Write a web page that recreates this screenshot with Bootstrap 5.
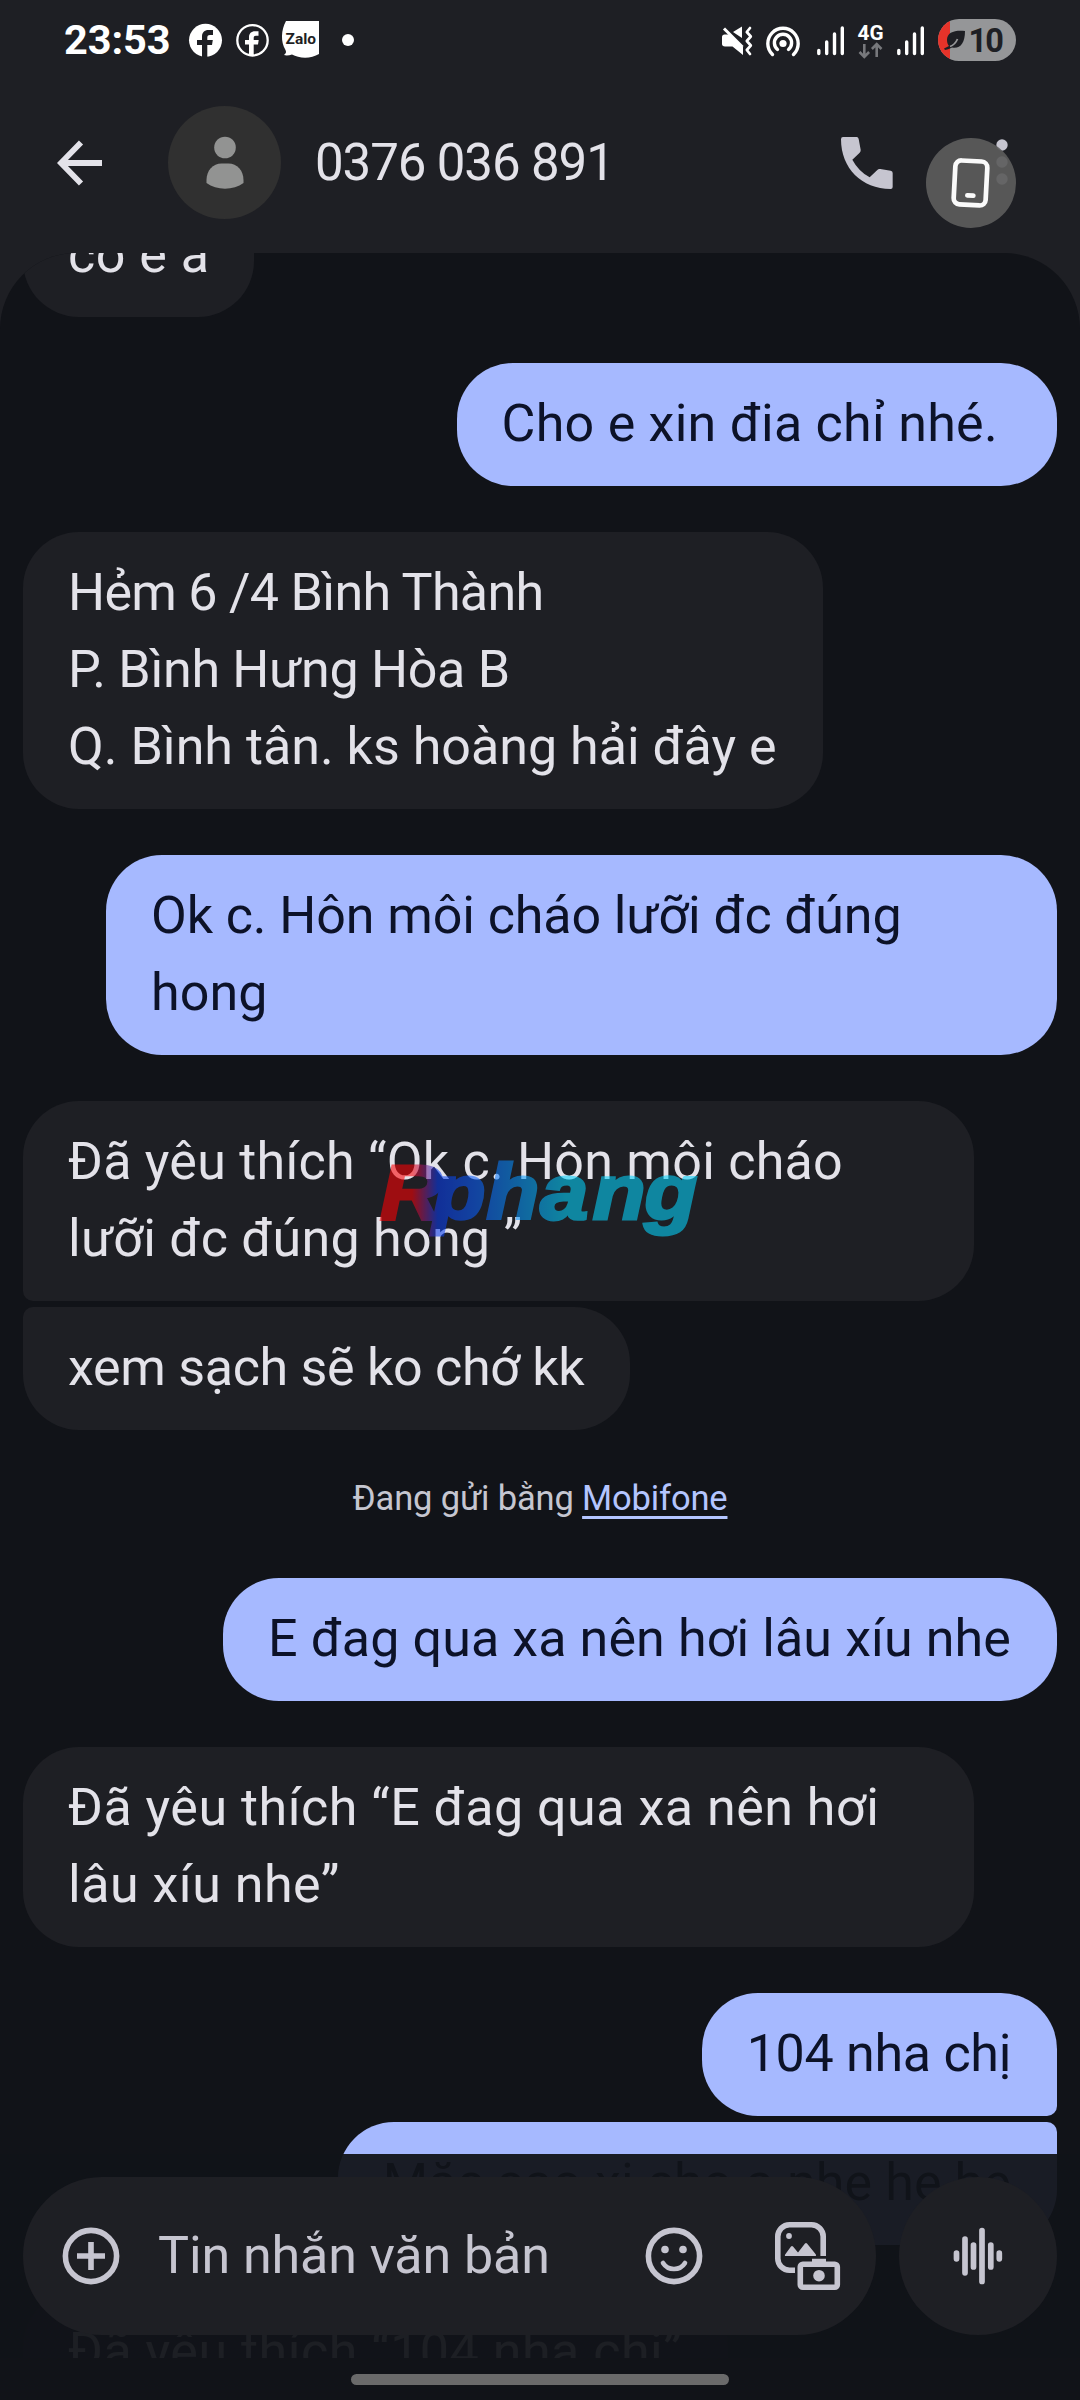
<!DOCTYPE html>
<html lang="vi" data-bs-theme="dark">
<head>
<meta charset="utf-8">
<meta name="viewport" content="width=device-width, initial-scale=1">
<title>0376 036 891</title>
<link rel="stylesheet" href="https://cdn.jsdelivr.net/npm/bootstrap@5.3.0/dist/css/bootstrap.min.css">
<style>
  body { background: #111318; font-family: Roboto, "Noto Sans", sans-serif; color: #e3e2e9; }
  .phone { width: 1080px; height: 2400px; background: #1e1f24; }
  .phone svg { display: block; flex: none; }
  .statusbar { height: 80px; padding: 0 60px 0 64px; color: #fff; }
  .clock { font-size: 41.5px; font-weight: 700; line-height: 80px; width: 121px; letter-spacing: -.1px; }
  .appbar { height: 173px; padding: 0 0 8px 57px; }
  .avatar { width: 113px; height: 113px; background: #303030; margin-left: 66px; }
  .contact { font-size: 51px; letter-spacing: -1.1px; line-height: 1; margin: 0 0 0 34px; width: 526px; font-weight: 400; color: #e3e2e9; }
  .assist { width: 90px; height: 90px; background: #5c5c5ceb; left: 925.5px; top: 137.5px; }
  .thread { height: 2105px; background: #111318; border-radius: 76px 76px 0 0; padding: 0 23px; }
  .below { height: 42px; background: #111318; }
  .bubble { font-size: 52px; line-height: 77px; padding: 22px 46px 24px 45px; border-radius: 56px; white-space: nowrap; letter-spacing: .1px; flex: none; margin-bottom: 46px; }
  .bubble div { height: 77px; }
  .got { background: #1e1f24; color: #e3e2e9; align-self: flex-start; }
  .sent { background: #a6b9ff; color: #0c1228; align-self: flex-end; }
  .first { margin-top: -59px; width: 231px; }
  .wide { width: 951px; }
  .joined { margin-bottom: 6px; }
  .got.joined { border-bottom-left-radius: 10px; }
  .got.joined + .got { border-top-left-radius: 10px; }
  .sent.joined { border-bottom-right-radius: 10px; }
  .sent.joined + .sent { border-top-right-radius: 10px; }
  .tight { letter-spacing: -.7px; }
  .close-set { letter-spacing: -.3px; }
  .snug { letter-spacing: -.1px; }
  .airy { letter-spacing: .25px; }
  .loose { letter-spacing: .5px; }
  .carrier { font-size: 34.5px; line-height: 44px; height: 102px; color: #c5c6d0; flex: none; letter-spacing: -.15px; }
  .carrier a { color: #b4c5ff; text-underline-offset: 6px; text-decoration-thickness: 2.5px; }
  .veil { height: 204px; background: #111318; opacity: .945; }
  .composer { left: 23px; right: 23px; top: 2177px; height: 158px; gap: 23px; color: #c6c5d0; }
  .field { width: 853px; background: #1e1f24; padding: 0 35px 0 39px; }
  .hint { font-size: 52px; line-height: 77px; margin: -2px 0 0 38px; width: 487px; letter-spacing: -.1px; }
  .mic { width: 158px; background: #1e1f24; }
  .homebar { left: 351px; top: 2374px; width: 378px; height: 11px; background: #6a6a6a; }
  .mark-logo { left: 370px; top: 1145px; opacity: .57; }
</style>
</head>
<body>
<main class="phone position-relative overflow-hidden">
  <header>
    <div class="statusbar d-flex align-items-center justify-content-between">
      <div class="d-flex align-items-center">
        <span class="clock">23:53</span>
        <svg width="180" height="80" viewBox="185 0 180 80" fill="#fff">
          <circle cx="205.5" cy="40.300" r="16.500"/>
          <path d="M202 57V45h-5v-5h5v-3.500c0-4 2.500-6.500 6.500-6.500h4.500v5h-3c-1.800 0-2.700.8-2.700 2.500V40h5.500l-.8 5h-4.700v12z" fill="#1e1f24"/>
          <circle cx="252.500" cy="40.300" r="15.200" fill="none" stroke="#fff" stroke-width="2.300"/>
          <path d="M249 55V44.500h-4V40h4v-3c0-3.600 2.300-5.800 6-5.800h3.500v4.500H256c-1.600 0-2.300.8-2.300 2.300v2h5l-.7 4.500h-4.300V55z"/>
          <path d="M286 21h33v33c-8 5-20 4.500-27 .5-3 1-6 1.300-8 .5 2-1.500 2.500-3 1.500-5-5-8-4.500-20 .5-29z"/>
          <text x="285.500" y="44" font-size="15" font-weight="700" fill="#1e1f24" textLength="30.500" lengthAdjust="spacingAndGlyphs" font-family="Roboto, sans-serif">Zalo</text>
          <circle cx="348" cy="40" r="6"/>
        </svg>
      </div>
      <svg width="305" height="80" viewBox="715 0 305 80" fill="#fff">
        <path d="M733 32l9-5.500V38zM722 37c0-1.500 1-2.500 2.500-2.500h4.500l14 12.500v8l-10.500-8.500H725c-2 0-3-1-3-2.500z"/>
        <path d="M724 28.500L742.500 47" stroke="#fff" stroke-width="3"/>
        <path d="M750 28l-3.200 4 4 4.500-4 4.500 4 4.500-4 4.500 3.200 4" fill="none" stroke="#fff" stroke-width="2.700" stroke-linejoin="round" stroke-linecap="round"/>
        <circle cx="783" cy="43.500" r="3.600"/>
        <path d="M777.500 49.500a8.600 8.600 0 1 1 11 0M772.500 54.500a15.200 15.200 0 1 1 21 0" fill="none" stroke="#fff" stroke-width="3.400" stroke-linecap="round"/>
        <path id="sig" d="M818.800 50.500v3M826.700 42v11.500M834.500 34v19.500M842.300 28v25.500" stroke="#fff" stroke-width="3.400" stroke-linecap="round"/>
        <use href="#sig" x="80"/>
        <text x="857.500" y="39.500" font-size="19.500" font-weight="700" textLength="26" lengthAdjust="spacingAndGlyphs" font-family="Roboto, sans-serif">4G</text>
        <path d="M864.300 44v12.500M859.500 52l4.800 4.800 4.800-4.800M876.700 57V44.500M871.900 49l4.800-4.800 4.800 4.800" fill="none" stroke="#77787c" stroke-width="2.600"/>
        <clipPath id="cell"><rect x="938" y="19" width="78" height="42" rx="21"/></clipPath>
        <g clip-path="url(#cell)"><rect x="938" y="19" width="78" height="42" fill="#959698"/><rect x="938" y="19" width="12" height="42" fill="#e6332a"/></g>
        <path d="M965 31c-10-1-18 1-18 9 0 3 1 5 2 6l-5 2.500 1 1.500c3-.5 5-1.500 7-2.500 8 1.500 13-4 13-16.500z" fill="#1e1f24"/>
        <path d="M950 46.500c3-1 6-4 7.500-7.500" stroke="#959698" stroke-width="1.800" fill="none"/>
        <text x="968.500" y="51.500" font-size="32.500" font-weight="700" fill="#1e1f24" textLength="35.500" font-family="Roboto, sans-serif">10</text>
      </svg>
    </div>
    <div class="appbar d-flex align-items-center">
      <svg width="45" height="46" viewBox="0 0 45 46" fill="none" stroke="#e3e2e9" stroke-width="5.800"><path d="M24 2.500L4 23l20 20.500M4 23h41"/></svg>
      <div class="avatar rounded-circle d-flex align-items-center justify-content-center">
        <svg width="38" height="54" viewBox="0 0 38 54" fill="#929392"><circle cx="19" cy="11.500" r="10.800"/><path d="M.5 47V44c0-9.500 6.500-16.500 15-16.500h7c8.500 0 15 7 15 16.500v3c-10 7.500-27 7.500-37 0z"/></svg>
      </div>
      <h1 class="contact">0376 036 891</h1>
      <svg width="52" height="52" viewBox="184 141 156 156" fill="#c6c5d0"><path d="M190 141h41q5 0 6 6l6 32q1 5-3 9l-22 21q18 34 52 53l23-22q3-4 9-3l31 5q6 1 6 7v42q0 6-6 6C246 297 184 235 184 148q0-7 6-7z"/></svg>
      <svg class="ms-auto" width="84" height="52" viewBox="0 0 84 52" fill="#c6c5d0"><circle cx="6" cy="8" r="5.700"/><circle cx="6" cy="25" r="5.700"/><circle cx="6" cy="42" r="5.700"/></svg>
    </div>
  </header>

  <section class="thread d-flex flex-column overflow-hidden position-relative">
    <div class="bubble got first"><div class="loose">có e a</div></div>
    <div class="bubble sent"><div class="airy">Cho e xin đia chỉ nhé.&nbsp;</div></div>
    <div class="bubble got">
      <div class="tight">Hẻm 6 /4 Bình Thành</div>
      <div class="close-set">P. Bình Hưng Hòa B</div>
      <div style="letter-spacing:0">Q. Bình tân. ks hoàng hải đây e</div>
    </div>
    <div class="bubble sent wide"><div class="snug">Ok c. Hôn môi cháo lưỡi đc đúng</div><div>hong</div></div>
    <div class="bubble got wide joined"><div class="airy">Đã yêu thích “Ok c. Hôn môi cháo</div><div class="airy">lưỡi đc đúng hong ”</div></div>
    <div class="bubble got"><div class="close-set">xem sạch sẽ ko chớ kk</div></div>
    <p class="carrier text-center mb-0">Đang gửi bằng <a href="#">Mobifone</a></p>
    <div class="bubble sent"><div>E đag qua xa nên hơi lâu xíu nhe</div></div>
    <div class="bubble got wide"><div class="loose">Đã yêu thích “E đag qua xa nên hơi</div><div class="loose">lâu xíu nhe”</div></div>
    <div class="bubble sent joined"><div class="close-set">104 nha chị</div></div>
    <div class="bubble sent"><div>Mặc sao xi cho a nhe he he</div></div>
    <div class="bubble got"><div class="loose">Đã yêu thích “104 nha chị”</div></div>
    <div class="veil position-absolute start-0 end-0 bottom-0"></div>
  </section>
  <div class="below"></div>

  <svg class="mark-logo position-absolute" width="345" height="105" viewBox="0 0 345 105">
    <defs><linearGradient id="wm" gradientUnits="userSpaceOnUse" x1="9" x2="295" y1="0" y2="0">
      <stop offset="0" stop-color="#ff0004"/><stop offset=".1" stop-color="#ff0004"/><stop offset=".18" stop-color="#083cf0"/><stop offset=".3" stop-color="#0a60ff"/><stop offset=".58" stop-color="#04d4ff"/><stop offset="1" stop-color="#04d4ff"/>
    </linearGradient></defs>
    <text transform="scale(1.12 1)" x="9 56 104 152 199 245" y="74" font-family="Liberation Sans, sans-serif" font-size="77" font-weight="700" font-style="italic" fill="url(#wm)" stroke="url(#wm)" stroke-width="3">Rphang</text>
  </svg>

  <div class="assist rounded-circle position-absolute d-flex align-items-center justify-content-center">
    <svg width="44" height="54" viewBox="0 0 44 54" fill="none" stroke="#fafafa" stroke-linecap="round"><g transform="rotate(3 22 27)"><rect x="5.500" y="5" width="32" height="44" rx="6" stroke-width="4.700"/><path d="M19 39.500h6" stroke-width="4.700"/></g></svg>
  </div>

  <footer class="composer position-absolute d-flex">
    <div class="field rounded-pill d-flex align-items-center">
      <svg width="58" height="58" viewBox="0 0 58 58" fill="none" stroke="currentColor" stroke-width="5.600"><circle cx="29" cy="29" r="25.600"/><path d="M29 15v28M15 29h28"/></svg>
      <span class="hint">Tin nhắn văn bản</span>
      <svg width="58" height="58" viewBox="0 0 58 58" fill="none" stroke="currentColor"><circle cx="29" cy="29" r="25.600" stroke-width="5.600"/><g fill="currentColor" stroke="none"><circle cx="20" cy="22.500" r="3.800"/><circle cx="38" cy="22.500" r="3.800"/></g><path d="M18 36c5 8 17 8 22 0" stroke-width="4.600" stroke-linecap="round"/></svg>
      <svg class="ms-auto" width="66" height="68" viewBox="0 0 66 68" fill="none" stroke="currentColor" stroke-width="5.600">
        <path d="M48.200 34V14.500a11.700 11.700 0 0 0-11.700-11.700h-22A11.700 11.700 0 0 0 2.800 14.500v22a11.700 11.700 0 0 0 11.700 11.700H20"/>
        <circle cx="14" cy="14" r="2.900" fill="currentColor" stroke="none"/>
        <path d="M10 34q-.5-1 .5-2l5.500-7.500q1-1 2 0l5 6 7-9q1-1.200 2 0l8.500 10.500q1 1.200.3 2z" fill="currentColor" stroke="none"/>
        <rect x="25.300" y="42.300" width="37" height="22.900" rx="2.500"/><path d="M37 39.500h14" stroke-width="5.500"/><circle cx="44" cy="53.700" r="5.800" fill="currentColor" stroke="none"/>
      </svg>
    </div>
    <div class="mic rounded-circle d-flex align-items-center justify-content-center">
      <svg width="50" height="58" viewBox="0 0 50 58" stroke="currentColor" stroke-width="5.700" stroke-linecap="round"><path d="M3.500 26.200v5.600M12 12.200v33.600M20.500 18v22M29 3.500v51M37.800 18v22M46.300 26.200v5.600"/></svg>
    </div>
  </footer>
  <div class="homebar rounded-pill position-absolute"></div>
</main>
<script src="https://cdn.jsdelivr.net/npm/bootstrap@5.3.0/dist/js/bootstrap.bundle.min.js"></script>
</body>
</html>
